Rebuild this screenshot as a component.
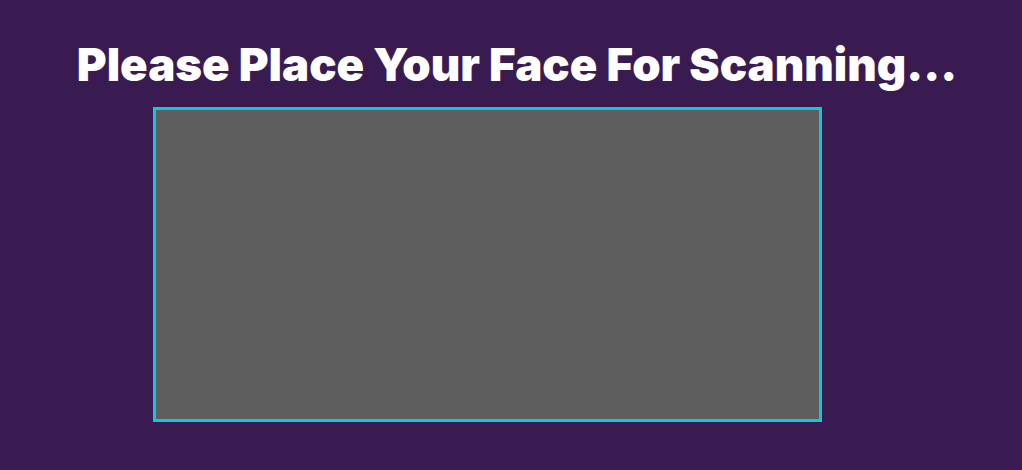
import React from 'react';

export default function App() {
  return (
    <div className="w-[1022px] h-[470px] bg-[#391b51] overflow-hidden" style={{ fontFamily: 'Inter, "Noto Sans", sans-serif' }}>
      <h1 className="pt-[36px] text-center text-white font-black text-[45.5px] leading-[57px] pl-[12px]">
        Please Place Your Face For Scanning...
      </h1>
      <div className="mt-[14px] ml-[153px] w-[669px] h-[315px] border-[3px] border-[#10c8d8] bg-[#5f5e5f]" />
    </div>
  );
}
